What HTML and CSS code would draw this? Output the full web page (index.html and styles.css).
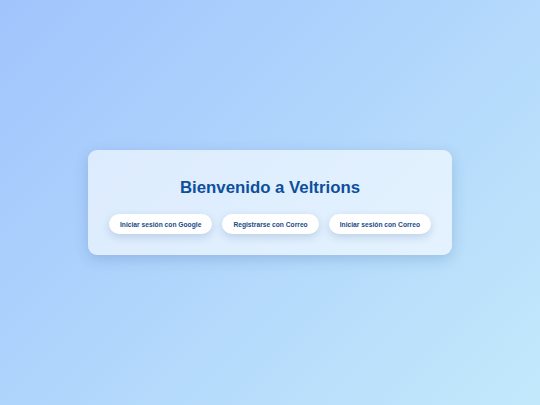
FILE: index.html
```html
<!DOCTYPE html>
<html lang="es">
<head>
<meta charset="utf-8">
<title>Veltrions</title>
<link rel="stylesheet" href="styles.css">
</head>
<body>
<main class="page">
  <section class="card">
    <h1 class="title">Bienvenido a Veltrions</h1>
    <div class="actions">
      <button class="btn">Iniciar sesión con Google</button>
      <button class="btn">Registrarse con Correo</button>
      <button class="btn">Iniciar sesión con Correo</button>
    </div>
  </section>
</main>
</body>
</html>
```
FILE: styles.css
```css
html, body {
  margin: 0;
  padding: 0;
  height: 100%;
}
body {
  font-family: "Liberation Sans", Arial, sans-serif;
  background: linear-gradient(135deg, #a1c4fd 0%, #c2e9fb 100%);
}
.page {
  height: 100%;
  display: flex;
  align-items: center;
  justify-content: center;
}
.card {
  box-sizing: border-box;
  width: 364px;
  height: 105px;
  border-radius: 9px;
  background: rgba(255, 255, 255, 0.6);
  box-shadow: 0 4px 14px rgba(40, 80, 140, 0.22);
  display: flex;
  flex-direction: column;
  align-items: center;
  padding-top: 28px;
}
.title {
  margin: 0;
  font-size: 16.8px;
  font-weight: 700;
  color: #0e4f9b;
  line-height: 20px;
}
.actions {
  display: flex;
  gap: 10px;
  margin-top: 16px;
}
.btn {
  font-family: "Liberation Sans", Arial, sans-serif;
  font-size: 6.7px;
  font-weight: 700;
  color: #1a4a86;
  background: #fff;
  border: none;
  border-radius: 10px;
  height: 20px;
  padding: 0 11px;
  box-shadow: 0 3px 8px rgba(40, 80, 140, 0.2);
}
```
